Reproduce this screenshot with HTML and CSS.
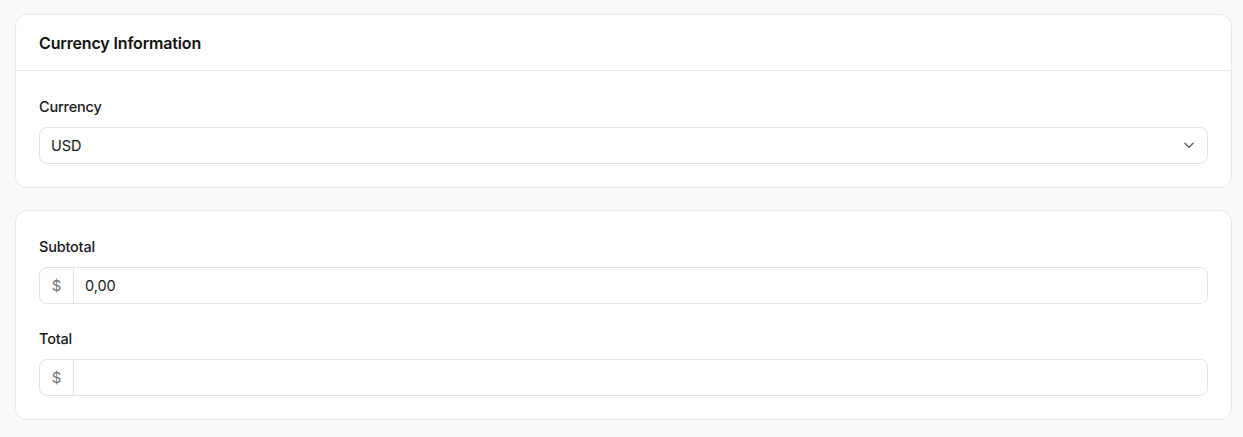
FILE: index.html
```html
<!DOCTYPE html>
<html lang="en">
<head>
    <meta charset="UTF-8">
    <meta name="viewport" content="width=device-width, initial-scale=1.0">
    <title>Currency Information</title>
    <link rel="stylesheet" href="styles.css">
</head>
<body>

<div class="page">
    <!-- currency section -->
    <section class="card">
        <div class="card-header">
            <h2>Currency Information</h2>
        </div>
        <div class="card-body">
            <div class="field">
                <label for="currency">Currency</label>
                <div class="select-wrap">
                    <select id="currency" name="currency">
                        <option value="USD">USD</option>
                        <option value="EUR">EUR</option>
                        <option value="GBP">GBP</option>
                    </select>
                    <svg class="chevron" width="14" height="14" viewBox="0 0 24 24" fill="none" stroke="currentColor" stroke-width="2.2" stroke-linecap="round" stroke-linejoin="round"><path d="M5 9l7 7 7-7"/></svg>
                </div>
            </div>
        </div>
    </section>

    <!-- totals -->
    <section class="card">
        <div class="card-body">
            <div class="field">
                <label for="subtotal">Subtotal</label>
                <div class="input-group">
                    <span class="prefix">$</span>
                    <input type="text" id="subtotal" name="subtotal" value="0,00">
                </div>
            </div>
            <div class="field">
                <label for="total">Total</label>
                <div class="input-group">
                    <span class="prefix">$</span>
                    <input type="text" id="total" name="total">
                </div>
            </div>
        </div>
    </section>
</div>

</body>
</html>
```

FILE: styles.css
```css
body {
    font-family: Inter, "Noto Sans", sans-serif;
    margin: 0;
    padding: 0;
    background-color: #f9f9f9;
    color: #18181b;
}
.page {
    padding: 14px 11px 14px 15px;
    display: flex;
    flex-direction: column;
    gap: 22px;
}
.card {
    background-color: #fff;
    border: 1px solid #e8e8e8;
    border-radius: 12px;
}
.card-header {
    height: 55px;
    padding: 0 23px;
    display: flex;
    align-items: center;
    border-bottom: 1px solid #e8e8e8;
}
.card-header h2 {
    margin: 0;
    font-size: 16px;
    font-weight: 600;
    letter-spacing: -0.15px;
    color: #111;
}
.card-body {
    padding: 24px 23px 23px;
    display: flex;
    flex-direction: column;
    gap: 23px;
}
.field label {
    display: block;
    font-size: 14.5px;
    font-weight: 500;
    letter-spacing: -0.2px;
    line-height: 24px;
    margin-bottom: 8px;
}
.select-wrap {
    position: relative;
}
select, .input-group {
    width: 100%;
    height: 37px;
    border: 1px solid #e2e2e2;
    border-radius: 8px;
    box-sizing: border-box;
    background-color: #fff;
}
select {
    appearance: none;
    -webkit-appearance: none;
    padding: 0 11px;
    font-family: inherit;
    font-size: 14.5px;
    letter-spacing: -0.1px;
    color: #18181b;
}
.chevron {
    position: absolute;
    right: 12px;
    top: 11px;
    color: #52525b;
    pointer-events: none;
}
.input-group {
    display: flex;
    align-items: stretch;
    overflow: hidden;
}
.prefix {
    width: 33px;
    display: flex;
    align-items: center;
    justify-content: center;
    border-right: 1px solid #e2e2e2;
    color: #71717a;
    font-size: 15px;
}
.input-group input {
    flex: 1;
    border: none;
    outline: none;
    padding: 0 11px;
    font-family: inherit;
    font-size: 14.5px;
    letter-spacing: -0.1px;
    color: #18181b;
}
```
